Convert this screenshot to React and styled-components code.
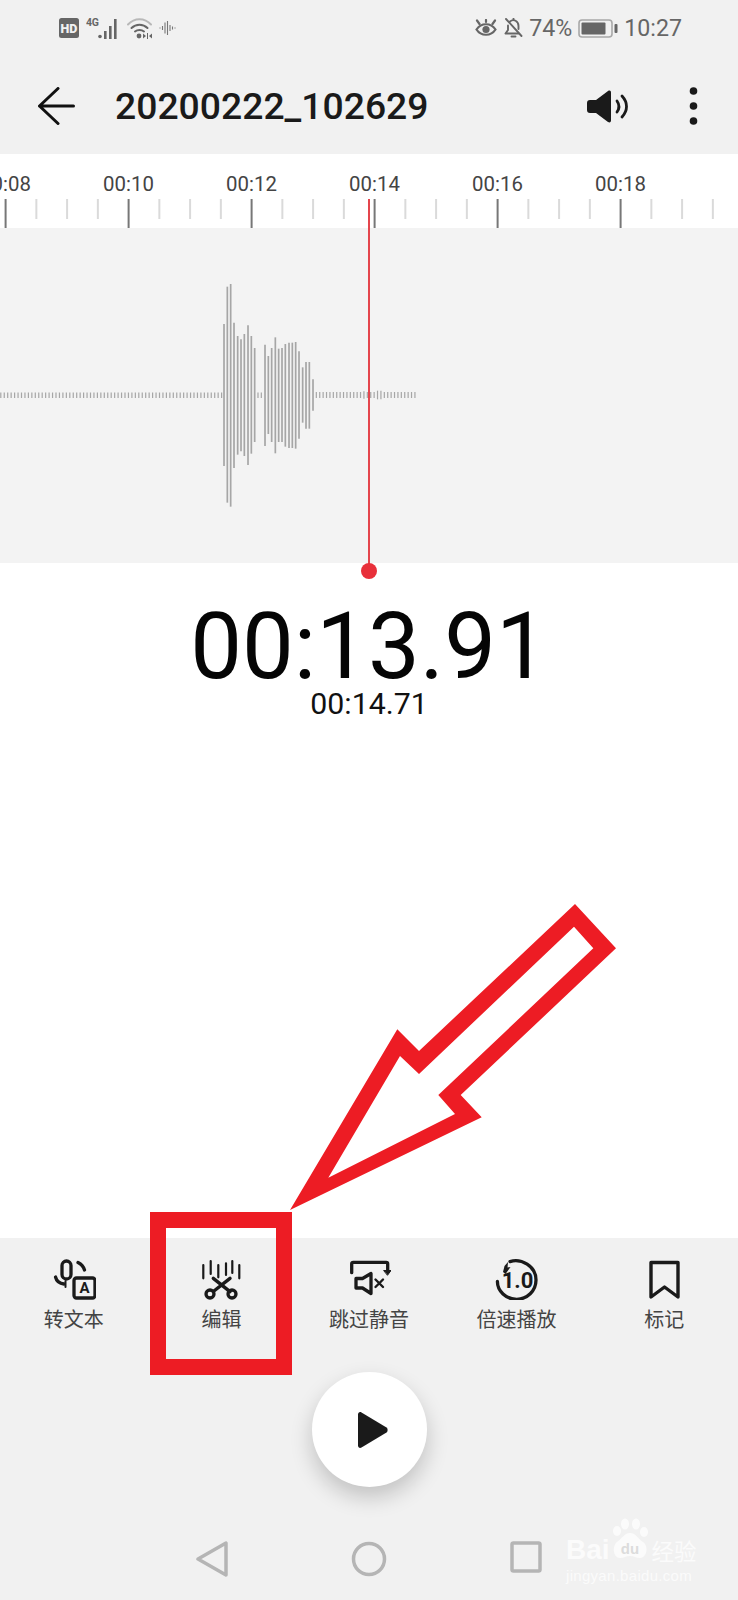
import React from 'react';
import styled, { createGlobalStyle } from 'styled-components';

const Global = createGlobalStyle`
  html, body { margin: 0; padding: 0; background: #f1f1f1; }
  * { box-sizing: border-box; }
`;

const Page = styled.div`
  position: relative;
  width: 738px;
  height: 1600px;
  overflow: hidden;
  display: flex;
  flex-direction: column;
  background: #f1f1f1;
  font-family: Roboto, "Noto Sans CJK SC", sans-serif;
`;

const StatusBar = styled.div`
  height: 56px;
  display: flex;
  align-items: center;
  justify-content: space-between;
  padding: 0 56px 0 59px;
  color: #666;
`;
const StatusGroup = styled.div`
  display: flex;
  align-items: center;
  gap: ${p => p.$gap || 7}px;
`;
const StatusText = styled.span`
  font-size: 23.2px;
  line-height: 26px;
  color: #666;
`;

const TitleBar = styled.div`
  height: 98px;
  display: flex;
  align-items: center;
  padding: 2px 0 0 38px;
`;
const Title = styled.div`
  margin-left: 40px;
  font-size: 37.3px;
  font-weight: 500;
  color: #1a1a1a;
  flex: 1;
`;
const TitleIcon = styled.svg`
  display: block;
  flex: none;
`;
const SpeakerIcon = styled(TitleIcon)`
  margin-right: 61px;
`;
const MoreIcon = styled(TitleIcon)`
  margin-right: 40px;
`;

const Ruler = styled.div`
  height: 74px;
  background: #fff;
  padding-top: 18px;
  overflow: hidden;
`;
const RulerLabels = styled.div`
  display: flex;
  margin-left: -56px;
  height: 24px;
`;
const RulerLabel = styled.span`
  flex: 0 0 123px;
  text-align: center;
  font-size: 20.4px;
  line-height: 24px;
  color: #444;
`;
const RulerTicks = styled.svg`
  display: block;
  margin-top: 3px;
`;

const WaveArea = styled.div`
  height: 335px;
  background: #f3f3f3;
`;
const WaveSvg = styled.svg`
  display: block;
`;

const TimerPanel = styled.div`
  height: 675px;
  background: #fff;
  padding-top: 39px;
  display: flex;
  flex-direction: column;
  align-items: center;
`;
const BigTime = styled.div`
  font-size: 92.2px;
  line-height: 90px;
  color: #050505;
`;
const SmallTime = styled.div`
  font-size: 30.3px;
  line-height: 24px;
  color: #111;
`;

const Actions = styled.div`
  display: grid;
  grid-template-columns: repeat(5, 1fr);
  padding-top: 18px;
`;
const Action = styled.div`
  display: flex;
  flex-direction: column;
  align-items: center;
  gap: 6px;
`;
const ActionIcon = styled.svg`
  display: block;
  fill: none;
  stroke: #1a1a1a;
  stroke-width: 3.3;
  stroke-linecap: round;
  stroke-linejoin: round;
`;
const ActionLabel = styled.span`
  font-family: "Noto Sans CJK SC", sans-serif;
  font-size: 20px;
  line-height: 26px;
  color: #444;
`;

const PlayRow = styled.div`
  display: flex;
  justify-content: center;
  margin-top: 40px;
`;
const PlayButton = styled.div`
  width: 115px;
  height: 115px;
  border-radius: 50%;
  background: #fff;
  display: flex;
  align-items: center;
  justify-content: center;
  box-shadow: 0 10px 22px rgba(0, 0, 0, 0.2);
  padding-left: 7px;
`;

const NavBar = styled.div`
  display: grid;
  grid-template-columns: 228px 282px 1fr;
  margin-top: 54px;
`;
const NavCell = styled.div`
  display: flex;
  justify-content: ${p => p.$align || 'center'};
`;
const NavIcon = styled.svg`
  display: block;
  fill: none;
  stroke: #b5b5b5;
  stroke-width: 3.5;
  stroke-linejoin: round;
`;

const Playhead = styled.div`
  position: absolute;
  left: 368px;
  top: 199px;
  width: 2px;
  height: 372px;
  background: #e4454c;
  &::after {
    content: '';
    position: absolute;
    left: -7px;
    bottom: -8px;
    width: 16px;
    height: 16px;
    border-radius: 50%;
    background: #e8303a;
  }
`;

const Highlight = styled.div`
  position: absolute;
  left: 150px;
  top: 1212px;
  width: 142px;
  height: 163px;
  border: 16px solid #ed1c24;
`;
const ArrowSvg = styled.svg`
  position: absolute;
  left: 280px;
  top: 900px;
`;

const Watermark = styled.div`
  position: absolute;
  left: 566px;
  top: 1519px;
  width: 134px;
  color: #fbfbfb;
  font-family: "Liberation Sans", sans-serif;
`;
const MarkTop = styled.div`
  display: flex;
  align-items: flex-end;
  height: 46px;
  font-size: 28px;
  font-weight: 700;
  line-height: 30px;
`;
const MarkCn = styled.span`
  font-family: "Noto Sans CJK SC", sans-serif;
  font-size: 22.5px;
  font-weight: 400;
  line-height: 30px;
  margin-left: 1px;
  white-space: nowrap;
`;
const MarkPaw = styled.svg`
  display: block;
  flex: none;
  margin: 0 0 1px -1px;
`;
const MarkUrl = styled.div`
  font-size: 15px;
  line-height: 18px;
  margin-top: 2px;
  white-space: nowrap;
  letter-spacing: 0.3px;
`;

const labels = ['00:08', '00:10', '00:12', '00:14', '00:16', '00:18'];

const tall = [
  [72, 162, 588], [82, 50, 698], [92, 42, 710], [102, 158, 594], [113, 198, 554],
  [123, 208, 544], [133, 192, 558], [144, 166, 585], [154, 198, 551], [164, 234, 516],
  [195, 224, 528], [205, 258, 492], [215, 234, 516],
  [226, 202, 550], [236, 236, 516], [246, 234, 516], [256, 222, 530], [267, 218, 534],
  [277, 218, 534], [287, 216, 536], [297, 244, 506], [308, 292, 458], [318, 276, 476],
  [328, 276, 476], [339, 328, 422],
];

const quiet = () => {
  const out = [];
  for (let x = 221.6; x > -2; x -= 3.45) out.push([x, 164.5, 170]);
  [174, 184].forEach(z => out.push([200 + z / 3, 164.5, 170]));
  for (let i = 0; i < 30; i++) {
    const z = 349 + i * 10.2;
    let t = 366, b = 384;
    if (Math.abs(z - 492) < 5) { t = 364; b = 386; }
    if (Math.abs(z - 533) < 5 || Math.abs(z - 543) < 5) { t = 362; b = 388; }
    out.push([200 + z / 3, 42 + t / 3, 42 + b / 3]);
  }
  return out;
};

const Signal = () => (
  <svg width="34" height="22" viewBox="0 0 34 22">
    <text x="0" y="9" fontFamily="Roboto, sans-serif" fontSize="10.5" fontWeight="700" fill="#666" textLength="13">4G</text>
    <g fill="#666">
      <circle cx="14" cy="19.5" r="1.8" />
      <rect x="18" y="14" width="2.6" height="8" />
      <rect x="23" y="9" width="2.6" height="13" />
      <rect x="28" y="2" width="2.6" height="20" />
    </g>
  </svg>
);

const Hd = () => (
  <svg width="20" height="20" viewBox="0 0 20 20">
    <rect width="20" height="20" rx="2.5" fill="#666" />
    <text x="10" y="14.5" textAnchor="middle" fontFamily="Roboto, sans-serif" fontSize="12.5" fontWeight="900" fill="#f1f1f1">HD</text>
  </svg>
);

const Wifi = () => (
  <svg width="25" height="22" viewBox="0 0 25 22" fill="none" strokeLinecap="round">
    <path d="M1 7.5 C7.5 0.5 17.5 0.5 24 7.5" stroke="#b8b8b8" strokeWidth="2" />
    <path d="M4.5 11 C9 6.5 16 6.5 20.5 11" stroke="#666" strokeWidth="2" />
    <path d="M8 14.5 C10.5 12.5 14.5 12.5 17 14.5" stroke="#666" strokeWidth="2" />
    <circle cx="12" cy="19" r="2.4" fill="#666" />
    <path d="M19 19 L16 16.5 V21.5 Z M20 16 H21 V22 H20 Z M22 19 L25 16.5 V21.5 Z" fill="#666" />
  </svg>
);

const Voice = () => (
  <svg width="18" height="14" viewBox="0 0 18 14" stroke="#777" strokeWidth="1.1">
    <path d="M1 6.5 V7.5 M3.5 5 V9 M6 1.5 V12.5 M8.5 0 V14 M11 4 V10 M13.5 5.5 V8.5 M16 6.5 V7.5" />
  </svg>
);

const Eye = () => (
  <svg width="24" height="18" viewBox="0 0 24 18" fill="none" stroke="#666" strokeWidth="2.2" strokeLinecap="round">
    <path d="M2.5 10.5 C7 3.5 17 3.5 21.5 10.5 C17 17.5 7 17.5 2.5 10.5 Z" />
    <circle cx="12" cy="10.5" r="3.6" fill="#666" stroke="none" />
    <path d="M3 1.5 L5.5 5 M21 1.5 L18.5 5 M12 1 V3" />
  </svg>
);

const BellOff = () => (
  <svg width="19" height="20" viewBox="0 0 19 20" fill="none" stroke="#666" strokeWidth="1.9" strokeLinecap="round" strokeLinejoin="round">
    <path d="M4 7.5 V12 L1.5 15.5 H14.5 M6 3.5 C9.5 0.5 14.5 3 14.5 8 V11" />
    <path d="M7.5 18.5 H11.5 M9.5 0.8 V1.8 M2 1 L17.5 18" />
  </svg>
);

const Battery = () => (
  <svg width="40" height="19" viewBox="0 0 40 19">
    <rect x="1" y="1" width="33" height="17" rx="3" fill="none" stroke="#a8a8a8" strokeWidth="1.6" />
    <rect x="3.5" y="3.5" width="24" height="12" rx="1" fill="#666" />
    <rect x="36.5" y="5" width="3" height="9" rx="1" fill="#666" />
  </svg>
);

const Speaker = () => (
  <SpeakerIcon width="41" height="33" viewBox="0 0 41 33" fill="none">
    <path d="M3 10 H9 L21 1 C23 0 24 1 24 2.5 V30.5 C24 32 23 33 21 32 L9 23 H3 C1 23 0 22 0 20 V13 C0 11 1 10 3 10 Z" fill="#1a1a1a" />
    <path d="M30 11 C32.5 14.5 32.5 18.5 30 22 M35 6 C41 12.5 41 20.5 35 27" stroke="#1a1a1a" strokeWidth="2.8" strokeLinecap="round" />
  </SpeakerIcon>
);

const icons = {
  text: (
    <>
      <rect x="10" y="5" width="9" height="18" rx="4.5" />
      <path d="M3.5 21 C4.5 25 8 27.5 12 28" />
      <path d="M13.5 25 V31" strokeWidth="2" />
      <path d="M26 6.5 C29 8 31.5 10.5 32.5 14" />
      <rect x="22" y="22" width="21" height="20" rx="2.5" />
      <text x="32.5" y="37" textAnchor="middle" fontFamily="Roboto, sans-serif" fontSize="15" fontWeight="700" fill="#1a1a1a" stroke="none">A</text>
    </>
  ),
  edit: (
    <>
      <path d="M4.3 9 V22.3 M11.7 5 V18 M19.3 9 V21.3 M27 7.3 V19 M33.3 5 V17 M40.3 9 V22.3" strokeWidth="2.2" />
      <path d="M14.3 35.5 L31 22.3 M31 35.7 L14.3 22.3" strokeWidth="3.4" />
      <circle cx="11" cy="38" r="4" />
      <circle cx="33" cy="38" r="4" />
    </>
  ),
  skip: (
    <>
      <path d="M4.7 16.7 V7.8 C4.7 6.8 5.2 6.3 6.2 6.3 H39.2 C40.2 6.3 40.7 6.8 40.7 7.8 V14" />
      <path d="M37 14.5 H44 L40.7 19 Z" fill="#1a1a1a" strokeWidth="1" />
      <path d="M9 22.5 H15.5 L24 17.5 V37.5 L15.5 32 H9 Z" />
      <path d="M28.5 23.5 L36 31 M36 23.5 L28.5 31" strokeWidth="2.4" />
    </>
  ),
  speed: (
    <>
      <path d="M15 5.6 C26 2 41 10 41 24 C41 35 32 43.3 21.7 43.3 C11 43.3 2.4 35 2.4 25.5" />
      <path d="M8 16 L9.5 10 L13 6 L12.5 11.5 L15.5 11 L10.5 18 Z" fill="#1a1a1a" stroke="none" />
      <text x="22.5" y="31.5" textAnchor="middle" fontFamily="Roboto, sans-serif" fontSize="22" fontWeight="700" fill="#1a1a1a" stroke="none">1.0</text>
    </>
  ),
  mark: <path d="M9 6.5 H36 V41 L22.5 31 L9 41 Z" strokeWidth="3.4" />,
};

const actions = [
  ['text', '转文本'],
  ['edit', '编辑'],
  ['skip', '跳过静音'],
  ['speed', '倍速播放'],
  ['mark', '标记'],
];

export default function App() {
  return (
    <>
      <Global />
      <Page>
        <StatusBar>
          <StatusGroup>
            <Hd />
            <Signal />
            <Wifi />
            <Voice />
          </StatusGroup>
          <StatusGroup $gap={6}>
            <Eye />
            <BellOff />
            <StatusText>74%</StatusText>
            <Battery />
            <StatusText>10:27</StatusText>
          </StatusGroup>
        </StatusBar>

        <TitleBar>
          <TitleIcon width="37" height="38" viewBox="0 0 37 38" fill="none" stroke="#111" strokeWidth="3" strokeLinecap="round" strokeLinejoin="round">
            <path d="M20 1.5 L1.5 19 L20 36.5 M1.5 19 H35.5" />
          </TitleIcon>
          <Title>20200222_102629</Title>
          <Speaker />
          <MoreIcon width="9" height="38" viewBox="0 0 9 38" fill="#1a1a1a">
            <circle cx="4.5" cy="4" r="3.8" />
            <circle cx="4.5" cy="19" r="3.8" />
            <circle cx="4.5" cy="34" r="3.8" />
          </MoreIcon>
        </TitleBar>

        <Ruler>
          <RulerLabels>
            {labels.map(l => <RulerLabel key={l}>{l}</RulerLabel>)}
          </RulerLabels>
          <RulerTicks width="738" height="29" viewBox="0 0 738 29">
            {Array.from({ length: 24 }, (_, i) => (
              <line
                key={i}
                x1={5.6 + i * 30.75}
                x2={5.6 + i * 30.75}
                y1="0"
                y2={i % 4 === 0 ? 29 : 20}
                stroke={i % 4 === 0 ? '#777' : '#dadada'}
                strokeWidth="2"
              />
            ))}
          </RulerTicks>
        </Ruler>

        <WaveArea>
          <WaveSvg width="738" height="335" viewBox="0 0 738 335">
            {quiet().map(([x, t, b], i) => (
              <line key={i} x1={x} x2={x} y1={t} y2={b} stroke="#a6a6a6" strokeWidth="1.2" />
            ))}
            {tall.map(([z, t, b]) => (
              <line key={z} x1={200 + z / 3} x2={200 + z / 3} y1={42 + t / 3} y2={42 + b / 3} stroke="#a6a6a6" strokeWidth="1.7" />
            ))}
          </WaveSvg>
        </WaveArea>

        <TimerPanel>
          <BigTime>00:13.91</BigTime>
          <SmallTime>00:14.71</SmallTime>
        </TimerPanel>

        <Actions>
          {actions.map(([k, label]) => (
            <Action key={k}>
              <ActionIcon width="44" height="44" viewBox="0 0 44 44">{icons[k]}</ActionIcon>
              <ActionLabel>{label}</ActionLabel>
            </Action>
          ))}
        </Actions>

        <PlayRow>
          <PlayButton>
            <svg width="32" height="38" viewBox="0 0 32 38">
              <path d="M4.5 1.5 L29.5 16.5 C31 17.7 31 20.3 29.5 21.5 L4.5 36.5 C2.8 37.5 1 36.5 1 34.5 V3.5 C1 1.5 2.8 0.5 4.5 1.5 Z" fill="#1a1a1a" />
            </svg>
          </PlayButton>
        </PlayRow>

        <NavBar>
          <NavCell $align="flex-end">
            <NavIcon width="32" height="36" viewBox="0 0 32 36">
              <path d="M30 2 V34 L2 18 Z" />
            </NavIcon>
          </NavCell>
          <NavCell>
            <NavIcon width="36" height="36" viewBox="0 0 36 36">
              <circle cx="18" cy="18" r="15.5" />
            </NavIcon>
          </NavCell>
          <NavCell $align="flex-start">
            <NavIcon width="32" height="32" viewBox="0 0 32 32">
              <rect x="2" y="2" width="28" height="28" rx="1.5" />
            </NavIcon>
          </NavCell>
        </NavBar>

        <Playhead />
        <Highlight />
        <ArrowSvg width="340" height="320" viewBox="280 900 340 320">
          <path
            fillRule="evenodd"
            fill="#ed1c24"
            d="M575 904 L616 948.3 L460.7 1095 L481.7 1117.3 L290 1210 L397.3 1029.3 L419 1051 Z M574 926.7 L419 1074 L400 1056 L328.3 1177.7 L455 1114 L438.3 1095 L593.3 948.3 Z"
          />
        </ArrowSvg>
        <Watermark>
          <MarkTop>
            Bai
            <MarkPaw width="42" height="46" viewBox="0 0 42 46" fill="#fbfbfb">
              <ellipse cx="8" cy="13" rx="4" ry="5" />
              <ellipse cx="16" cy="6" rx="4" ry="5.5" />
              <ellipse cx="27" cy="6" rx="4" ry="5.5" />
              <ellipse cx="35" cy="14" rx="4" ry="5" />
              <path d="M21 15 C27 15 29 21 34 24 C40 28 38 40 31 40 C27 40 25 38 21 38 C17 38 15 40 11 40 C4 40 3 28 8 24 C13 21 15 15 21 15 Z" />
              <text x="21" y="36" textAnchor="middle" fontFamily="Liberation Sans, sans-serif" fontSize="15" fontWeight="700" fill="#dcdcdc">du</text>
            </MarkPaw>
            <MarkCn>经验</MarkCn>
          </MarkTop>
          <MarkUrl>jingyan.baidu.com</MarkUrl>
        </Watermark>
      </Page>
    </>
  );
}
